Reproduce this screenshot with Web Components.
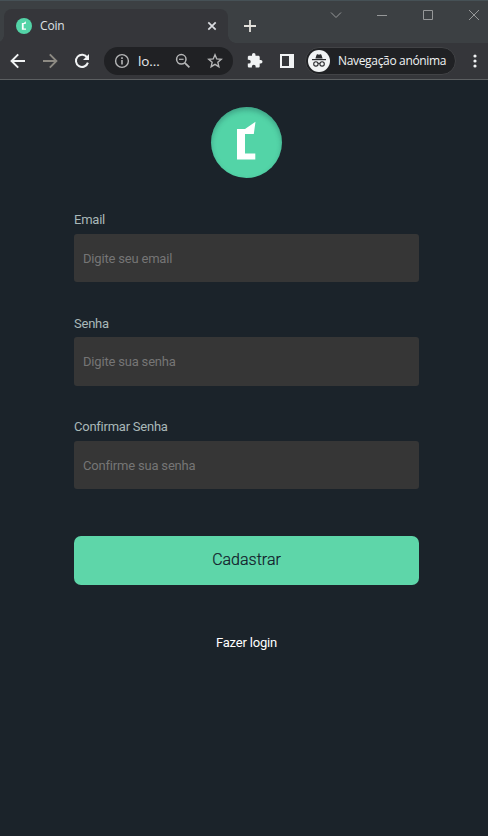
<!DOCTYPE html>
<html lang="pt">
<head>
<meta charset="utf-8">
<title>Coin</title>
<style>
html,body{margin:0;height:100%;background:#1b232a;overflow:hidden}
</style>
</head>
<body>
<coin-app></coin-app>
<script>
const define = (name, html, setup) => customElements.define(name, class extends HTMLElement {
  constructor() {
    super();
    this.attachShadow({mode: 'open'}).innerHTML = html;
  }
  connectedCallback() { if (setup) setup(this, this.shadowRoot); }
});

const ICONS = {
  back: '<path d="M25 18H12M18.2 11.4 11.6 18l6.6 6.6" transform="translate(-2 -2)" fill="none" stroke="currentColor" stroke-width="2"/>',
  forward: '<path d="M9 16h13M15.8 9.4l6.6 6.6-6.6 6.6" fill="none" stroke="currentColor" stroke-width="1.9"/>',
  reload: '<path d="M21.2 12.6A6.1 6.1 0 1 0 21.9 17.6" fill="none" stroke="currentColor" stroke-width="2"/><path d="M23 9v6h-6z" fill="currentColor"/>',
  info: '<circle cx="16" cy="16" r="6.4" fill="none" stroke="currentColor" stroke-width="1.4"/><path d="M16 15v4.5M16 12.3v1.6" stroke="currentColor" stroke-width="1.6"/>',
  zoom: '<circle cx="14.3" cy="14.3" r="4.7" fill="none" stroke="currentColor" stroke-width="1.5"/><path d="M17.8 17.8l4.6 4.6" stroke="currentColor" stroke-width="1.8"/><path d="M12 14.3h4.6" stroke="currentColor" stroke-width="1.2"/>',
  star: '<path d="M16 9.8l1.75 4.15 4.5.4-3.4 2.95 1 4.4L16 19.35l-3.85 2.35 1-4.4-3.4-2.95 4.5-.4z" fill="none" stroke="currentColor" stroke-width="1.4"/>',
  puzzle: '<path transform="translate(7.4 7.2) scale(.7)" d="M20.500 11H19V7c0-1.100-.9-2-2-2h-4V3.500a2.500 2.500 0 0 0-5 0V5H4c-1.100 0-1.990.9-1.990 2v3.800H3.500a2.700 2.700 0 0 1 0 5.400H2V20c0 1.100.9 2 2 2h3.800v-1.500a2.700 2.700 0 0 1 5.400 0V22H17c1.100 0 2-.9 2-2v-4h1.500a2.500 2.500 0 0 0 0-5z" fill="currentColor"/>',
  panel: '<path fill-rule="evenodd" d="M9 9h14v14H9zM11 11v10h7V11z" fill="currentColor"/>',
  menu: '<g fill="currentColor"><circle cx="16" cy="11" r="1.600"/><circle cx="16" cy="16" r="1.600"/><circle cx="16" cy="21" r="1.600"/></g>',
  close: '<path d="M12.300 12.300l7.400 7.400M19.700 12.300l-7.400 7.400" stroke="currentColor" stroke-width="1.700"/>',
  plus: '<path d="M16 10v12M10 16h12" stroke="currentColor" stroke-width="1.800"/>',
  chevron: '<path d="M11 13.500l5 5 5-5" fill="none" stroke="currentColor"/>',
  minimize: '<path d="M11 16.500h10" stroke="currentColor"/>',
  maximize: '<path d="M11.500 11.500h9v9h-9z" fill="none" stroke="currentColor"/>',
  exit: '<path d="M11 11l10 10M21 11L11 21" stroke="currentColor"/>',
  incognito: '<circle cx="16" cy="16" r="11" fill="#f1f3f4"/><g fill="#292a2d"><path d="M12.400 13.600l1.200-3.800q.3-.7 1-.5l1.400.4 1.400-.4q.7-.2 1 .5l1.200 3.800z"/><path d="M9 14h14v1.200H9z"/></g><g fill="none" stroke="#292a2d" stroke-width="1.100"><circle cx="12.900" cy="18.900" r="2.200"/><circle cx="19.100" cy="18.900" r="2.200"/><path d="M15.100 18.600q.9-.6 1.800 0"/></g>'
};

define('ui-icon', `<style>:host{display:block;width:32px;height:32px;flex:none}svg{display:block}</style><svg width="32" height="32" viewBox="0 0 32 32"></svg>`,
  (el, root) => { root.querySelector('svg').innerHTML = ICONS[el.getAttribute('name')]; });

define('coin-logo', `<style>
:host{display:block;width:71px;height:71px;flex:none}
div{width:100%;height:100%;border-radius:50%;background:#53d4a7;box-shadow:var(--logo-shade,inset 0 3px 5px rgba(25,75,75,.35))}
svg{display:block;width:100%;height:100%}
</style><div><svg viewBox="0 0 71 71"><path d="M26 22h8l10.500-7.300L42.800 27H34v19.500h10.300v6H26z" fill="#fff"/></svg></div>`);

define('tab-strip', `<style>
:host{display:flex;box-sizing:border-box;height:43px;padding:9px 0 0;background:#3c4043;border-top:1px solid #465156;overflow:hidden;color:#dfe1e5;font:12px "Open Sans","Noto Sans",sans-serif}
.tab{display:flex;align-items:center;width:224px;height:34px;margin-top:-1px;flex:none;background:#35363a;border-radius:8px 8px 0 0}
coin-logo{width:16px;height:16px;margin:0 8px 0 12px;--logo-shade:none}
span{flex:1;letter-spacing:-.15px;padding-bottom:1px}
.curve{width:8px;height:8px;align-self:flex-end;background:radial-gradient(circle at 100% 0,#3c4043 7.500px,#35363a 8px)}
.curve.left{width:4px;background:radial-gradient(circle at -4px 0,#3c4043 7.500px,#35363a 8px)}
.tab ui-icon{color:#dadce0}
.add{margin:0 0 0 -2px;color:#e3e1dc}
.win{display:flex;margin:-11px 0 0 auto;color:#969899;width:175px;overflow:hidden}
.win ui-icon{margin:0 7px}
</style><i class="curve left"></i><div class="tab"><coin-logo></coin-logo><span>Coin</span><ui-icon name="close"></ui-icon></div><i class="curve"></i><ui-icon class="add" name="plus"></ui-icon>
<div class="win"><ui-icon name="chevron"></ui-icon><ui-icon name="minimize"></ui-icon><ui-icon name="maximize"></ui-icon><ui-icon name="exit"></ui-icon></div>`);

define('browser-toolbar', `<style>
:host{display:flex;align-items:center;box-sizing:border-box;height:37px;padding-left:2px;background:#35363a;border-bottom:1px solid #5c5f61;color:#f1f3f4;font:12px "Open Sans","Noto Sans",sans-serif;overflow:hidden}
.off{color:#8d8a83}
.url{display:flex;align-items:center;flex:none;box-sizing:border-box;width:129px;height:28px;margin:0 6px;padding-left:2px;background:#202124;border-radius:14px;color:#b5b6b7}
.url span{width:31px;color:#e8eaed;font-size:13.500px;letter-spacing:-.1px;padding-bottom:1px;box-sizing:border-box;white-space:nowrap}
.url ui-icon:nth-child(3){margin-left:-2px}
.private{display:flex;align-items:center;flex:none;box-sizing:border-box;width:151px;height:28px;margin:0 3px 0 2px;background:#202124;border:1px solid #424346;border-radius:14px}
.private ui-icon{margin-left:-3px}
.private span{margin-left:3px;white-space:nowrap;letter-spacing:-.33px;padding-bottom:1px}
</style><ui-icon name="back"></ui-icon><ui-icon class="off" name="forward"></ui-icon><ui-icon name="reload"></ui-icon>
<div class="url"><ui-icon name="info"></ui-icon><span>lo...</span><ui-icon name="zoom"></ui-icon><ui-icon name="star"></ui-icon></div>
<ui-icon name="puzzle"></ui-icon><ui-icon name="panel"></ui-icon>
<div class="private"><ui-icon name="incognito"></ui-icon><span>Navegação anónima</span></div><ui-icon name="menu"></ui-icon>`);

define('form-field', `<style>
:host{display:block}
label{display:block;height:15px;padding-top:.3px;margin-bottom:6.700px;font-size:13px;line-height:15px;letter-spacing:-.24px;color:#a9b8b8}
input{display:block;box-sizing:border-box;width:100%;height:48.500px;padding:.4px 9px 0;border:0;border-radius:3px;background:#363636;font:inherit;font-size:13px;letter-spacing:-.19px;color:#ddd;outline:0}
input::placeholder{color:#757575;opacity:1}
</style><label><slot></slot></label><input>`,
  (el, root) => { root.querySelector('input').placeholder = el.getAttribute('hint'); });

define('primary-button', `<style>
:host{display:block}
button{display:block;width:100%;height:49px;padding:0 0 2px;border:0;border-radius:7px;background:#5ed6a9;color:#121a2a;font:300 16px Roboto,sans-serif;-webkit-text-stroke:.2px #121a2a}
</style><button><slot></slot></button>`);

define('signup-page', `<style>
:host{display:flex;flex-direction:column;align-items:center;flex:1;padding:27.400px 69px 0 74px;font-family:Roboto,sans-serif}
form{display:flex;flex-direction:column;align-self:stretch;gap:33px;margin-top:33.500px}
form-field+form-field{margin-top:-.1px}
primary-button{margin-top:13.500px}
a{margin-top:50.200px;color:#fff;font-size:13px;line-height:15px;letter-spacing:-.18px}
</style><coin-logo></coin-logo>
<form><form-field hint="Digite seu email">Email</form-field><form-field hint="Digite sua senha">Senha</form-field><form-field hint="Confirme sua senha">Confirmar Senha</form-field><primary-button>Cadastrar</primary-button></form>
<a>Fazer login</a>`);

define('coin-app', `<style>:host{display:flex;flex-direction:column;height:100vh}</style><tab-strip></tab-strip><browser-toolbar></browser-toolbar><signup-page></signup-page>`);
</script>
</body>
</html>
